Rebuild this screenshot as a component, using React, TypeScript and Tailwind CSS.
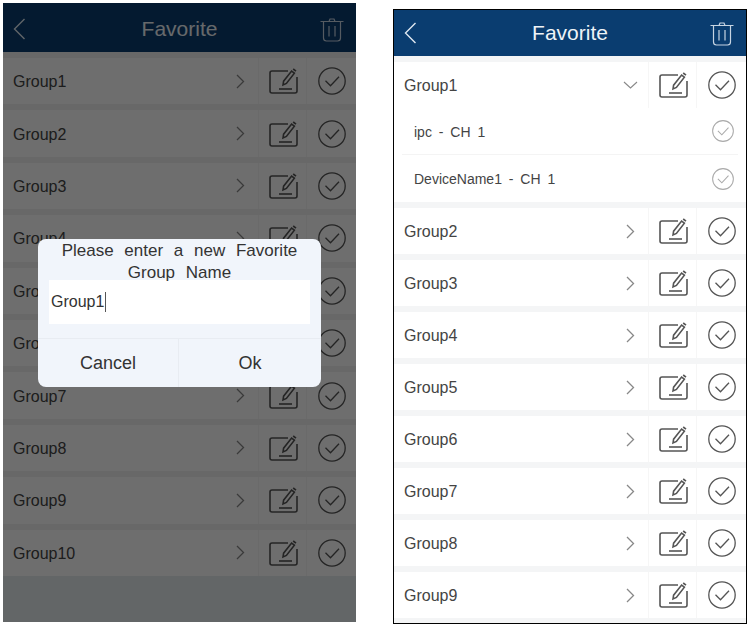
const left = ["Group1", "Group2", "Group3", "Group4", "Group5", "Group6", "Group7", "Group8", "Group9", "Group10"];
const right = ["Group2", "Group3", "Group4", "Group5", "Group6", "Group7", "Group8", "Group9"];

function BackIcon() {
  return (
    <svg width="13" height="22" viewBox="0 0 13 22" fill="none" stroke="#dfe8f0" strokeWidth="1.4">
      <path d="M11.5 1 1.5 11l10 10" />
    </svg>
  );
}

function TrashIcon() {
  return (
    <svg width="24" height="25" viewBox="0 0 24 25" fill="none" stroke="#c6d4e2" strokeWidth="1.2">
      <path d="M0.5 4.5h23M9 4.5 10 2h4l1 2.5" />
      <path d="M3.5 4.5V21a3 3 0 0 0 3 3h11a3 3 0 0 0 3-3V4.5" />
      <path d="M9 9v10.5M15 9v10.5" />
    </svg>
  );
}

function EditIcon() {
  return (
    <svg width="30" height="28" viewBox="-1 0 30 28" fill="none" stroke="#555" strokeWidth="1.6">
      <path d="M19 4H3a2 2 0 0 0-2 2v18a2 2 0 0 0 2 2h23a2 2 0 0 0 2-2V10" />
      <path d="M10 22h13" />
      <path d="M14 18 14.600 14.200 22.600 4 25.400 6.200 17.400 16.400z" />
      <path d="M24.200 2 27 4.200" />
    </svg>
  );
}

function CheckIcon({ size = 28, color = "#555" }: { size?: number; color?: string }) {
  return (
    <svg width={size} height={size} viewBox="0 0 28 28" fill="none" stroke={color} strokeWidth="1.300">
      <circle cx="14" cy="14" r="13.200" />
      <path d="M7.500 13.800 12.500 18.800 21 9.800" />
    </svg>
  );
}

function Chevron() {
  return (
    <svg width="9" height="15" viewBox="0 0 9 15" fill="none" stroke="#888" strokeWidth="1.300">
      <path d="M1 1l6.500 6.500L1 14" />
    </svg>
  );
}

function ChevronDown() {
  return (
    <svg width="15" height="8" viewBox="0 0 15 8" fill="none" stroke="#888" strokeWidth="1.100">
      <path d="M1 1l6.500 6L14 1" />
    </svg>
  );
}

function Header() {
  return (
    <div className="flex h-[46px] items-center justify-between bg-[#0a3d70]">
      <div className="flex w-12 pl-[10px]">
        <BackIcon />
      </div>
      <span className="text-[21px] text-[#eef3f7]">Favorite</span>
      <div className="flex w-12 justify-end pr-[12px]">
        <TrashIcon />
      </div>
    </div>
  );
}

function GroupRow({ name, open, height }: { name: string; open?: boolean; height: string }) {
  return (
    <div className={`flex ${height} items-center bg-white`}>
      <span className="flex-1 pl-[10px] pt-[2px] text-[16px] text-[#444]">{name}</span>
      <div className="flex w-9 justify-center">{open ? <ChevronDown /> : <Chevron />}</div>
      <div className="flex h-full w-[49px] items-center justify-center border-x border-[#f6f6f6]">
        <EditIcon />
      </div>
      <div className="flex w-[49px] justify-center">
        <CheckIcon />
      </div>
    </div>
  );
}

function SubRow({ name }: { name: string }) {
  return (
    <div className="mx-2 flex h-[47px] items-center justify-between bg-white">
      <span className="pl-3 pt-[2px] text-[14px] text-[#444] [word-spacing:3px]">{name}</span>
      <div className="pr-[4px]">
        <CheckIcon size={22} color="#aaa" />
      </div>
    </div>
  );
}

export default function App() {
  return (
    <div className="flex h-[628px] w-[750px] items-start overflow-hidden bg-white font-['Liberation_Sans',Arial,sans-serif]">
      <div className="relative ml-[3px] mt-[3px] h-[619px] w-[353px] shrink-0 overflow-hidden bg-[#e6edef]">
        <div className="h-[3px] bg-[#0a3d70]" />
        <Header />
        <div className="flex flex-col gap-[6px] bg-[#f0f0f0] pt-[6px]">
          {left.map((name) => (
            <GroupRow key={name} name={name} height="h-[46.400px]" />
          ))}
        </div>
        <div className="absolute inset-0 bg-black/[0.57]" />
        <div className="absolute left-[35px] top-[236px] h-[148px] w-[283px] overflow-hidden rounded-lg bg-[#f1f5fb] text-[#333]">
          <div className="h-[41px] pt-px text-center text-[17px] leading-[22px] [word-spacing:6px]">
            <div>Please enter a new Favorite</div>
            <div>Group Name</div>
          </div>
          <div className="mx-[11px] flex h-[44px] items-center bg-white pl-[2px] text-[16px]">
            Group1
            <span className="ml-[1px] h-[20px] w-px bg-[#555]" />
          </div>
          <div className="mt-[14px] flex h-[49px] border-t border-[#e8ecf2] text-[18px]">
            <div className="flex w-[141px] items-center justify-center border-r border-[#e8ecf2]">Cancel</div>
            <div className="flex flex-1 items-center justify-center">Ok</div>
          </div>
        </div>
      </div>

      <div className="ml-[37px] mt-[9px] h-[615px] w-[354px] shrink-0 overflow-hidden border border-black bg-[#f4f5f6]">
        <Header />
        <div className="flex flex-col gap-[6px] pt-[6px]">
          <div className="bg-white">
            <GroupRow name="Group1" open height="h-[46px]" />
            <div className="divide-y divide-[#f4f4f4]">
              <SubRow name="ipc - CH 1" />
              <SubRow name="DeviceName1 - CH 1" />
            </div>
          </div>
          {right.map((name) => (
            <GroupRow key={name} name={name} height="h-[46px]" />
          ))}
        </div>
      </div>
    </div>
  );
}
